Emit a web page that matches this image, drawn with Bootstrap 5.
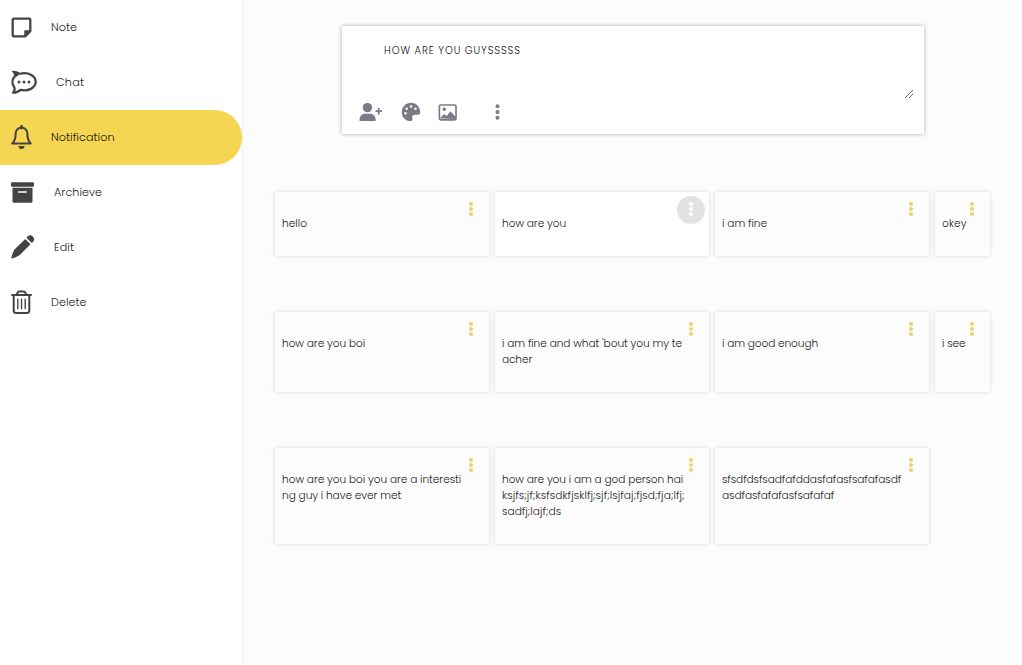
<!DOCTYPE html>
<html lang="en">
<head>
<meta charset="utf-8">
<meta name="viewport" content="width=device-width, initial-scale=1">
<title>Notes</title>
<link href="https://cdn.jsdelivr.net/npm/bootstrap@5.3.0/dist/css/bootstrap.min.css" rel="stylesheet">
<style>
body{background:#fcfcfc;color:#222;font-family:Poppins,Inter,"Open Sans",sans-serif;font-size:10.6px;font-weight:300;line-height:16px;overflow:hidden}
.sidebar{width:243px;background:#fff;border-right:1px solid #efefef}
.side-item{height:55px;width:242px;padding:0 0 1px 11px;color:#222;text-decoration:none;font-size:11.2px;gap:19px}
.side-item.active{background:#f6d553;border-radius:0 28px 28px 0;color:#111}
.side-item svg{color:#444;flex:none}
.composer{width:582px;height:108px;margin:26px 0 0 99px;background:#fff;border-radius:1px;box-shadow:0 0 4px rgba(0,0,0,.32)}
.composer-text{height:74px;padding:17px 11px 0 42px;font-size:10px;font-weight:300;color:#111}
.grip{margin-bottom:2px}
.composer-tools{height:24px;padding-left:17px;color:#7a7b86}
.board{margin:58px 0 0 32px;gap:56px}
.note-row{gap:6px}
.note{width:214px;border-radius:2px;box-shadow:0 0 4px rgba(0,0,0,.15);padding:24px 0 24px 7px}
.note.narrow{width:55px}
.note.hovered{background:#fff}
.note-menu{position:absolute;top:4px;right:4px;width:28px;height:28px;border-radius:50%;color:#edd574}
.hovered .note-menu{background:#e2e2e2;color:#fff}
.note-menu svg{position:absolute;left:11px;top:5px}
.ln{display:block;white-space:nowrap;width:max-content}
</style>
</head>
<body class="vh-100">
<svg width="0" height="0" class="position-absolute">
<symbol id="dots" viewBox="0 0 6 16"><g fill="currentColor"><circle cx="3" cy="3" r="2.1"/><circle cx="3" cy="8" r="2.1"/><circle cx="3" cy="13" r="2.1"/></g></symbol>
</svg>
<div class="d-flex vh-100">
<nav class="sidebar d-flex flex-column flex-shrink-0">
  <a class="side-item d-flex align-items-center" href="#"><svg width="21" height="21" viewBox="0 0 21 21" fill="none" stroke="currentColor" stroke-width="2.3" stroke-linejoin="round"><path d="M2.7 1.7h15.600a1 1 0 0 1 1 1v11.600l-5 5H2.700a1 1 0 0 1-1-1V2.700a1 1 0 0 1 1-1z"/><path d="M14 19v-5h5l-5 5z" fill="currentColor" stroke-width="1.5"/></svg><span class="ln" data-w="26">Note</span></a>
  <a class="side-item d-flex align-items-center" href="#"><svg width="26" height="24" viewBox="0 0 26 24"><path d="M9 3.800C17 1.800 24.700 5.500 24.700 11.800S17 21.600 9.500 19.900C7.500 21.800 5 22.800 2 22.700c1.600-1.700 1.900-3.700 1.300-5.300C.8 14 1 9.500 3.500 6.500" fill="none" stroke="currentColor" stroke-width="2.300" stroke-linejoin="round"/><path d="M.6.800C4.500.4 7.800 1.600 10 3.600L3.500 8C3.400 4.800 2.300 2.600.6.800z" fill="currentColor"/><g fill="currentColor"><circle cx="8" cy="12" r="1.500"/><circle cx="13" cy="12" r="1.500"/><circle cx="18" cy="12" r="1.500"/></g></svg><span class="ln" data-w="28">Chat</span></a>
  <a class="side-item active d-flex align-items-center" href="#"><svg width="21" height="24" viewBox="0 0 21 24"><path d="M10.500 2.800C6.500 2.800 4.600 5.600 4.600 9c0 5-1.200 7.400-3.300 9.500h18.400c-2.100-2.100-3.300-4.500-3.300-9.500 0-3.400-1.900-6.200-5.900-6.200z" fill="none" stroke="currentColor" stroke-width="2.100" stroke-linejoin="round"/><path d="M10.500 1.400v1.600" stroke="currentColor" stroke-width="2.800" stroke-linecap="round"/><path d="M7.500 20.900h6a3 3 0 0 1-6 0z" fill="currentColor"/></svg><span class="ln" data-w="63.5">Notification</span></a>
  <a class="side-item d-flex align-items-center" href="#"><svg width="24" height="21" viewBox="0 0 24 21"><rect y=".3" width="23" height="4.500" rx="1" fill="currentColor"/><path d="M1.500 5.800h20v13.400a1.500 1.500 0 0 1-1.500 1.500H3a1.500 1.500 0 0 1-1.500-1.500z" fill="currentColor"/><rect x="7" y="9.200" width="9" height="1.500" rx=".7" fill="#fff"/></svg><span class="ln" data-w="48">Archieve</span></a>
  <a class="side-item d-flex align-items-center" href="#"><svg width="24" height="24" viewBox="0 0 24 24" fill="currentColor"><path d="M14.200 3.900 19.500 9.200 8.800 20Q5.500 22.200 1.300 23.400.2 23.600.4 22.500 1.300 18.500 3.500 14.600z"/><path d="M15.400 2.700 17 1.100c1.400-1.400 3.400-.9 4.800.5s1.900 3.400.5 4.800l-1.600 1.600z"/></svg><span class="ln" data-w="20">Edit</span></a>
  <a class="side-item d-flex align-items-center" href="#"><svg width="21" height="24" viewBox="0 0 21 24" fill="none" stroke="currentColor" stroke-width="2" stroke-linecap="round"><path d="M1 5h19M5.500 4.600 7 2.200Q7.500 1.500 8.300 1.500h4.400q.8 0 1.300.7l1.500 2.400M2.700 5v15.500Q2.700 23 5.300 23h10.400q2.600 0 2.600-2.500V5"/><path d="M6.800 9.200v9.300M10.500 9.200v9.300M14.200 9.200v9.300" stroke-width="1.400"/></svg><span class="ln" data-w="35.5">Delete</span></a>
</nav>
<main class="flex-grow-1">
  <section class="composer">
    <div class="composer-text d-flex justify-content-between"><span class="ln" data-w="136.7">HOW ARE YOU GUYSSSSS</span><svg width="8" height="8" viewBox="0 0 8 8" class="grip align-self-end" stroke="#555" stroke-width=".9"><path d="M0 8 8 0M4 8l4-4"/></svg></div>
    <div class="composer-tools d-flex align-items-center">
      <svg width="24" height="20" viewBox="0 0 24 20" fill="currentColor"><circle cx="8.500" cy="5.600" r="4.700"/><path d="M.6 19v-1.500c0-3.200 2.300-5.700 5.500-5.700h5c3.200 0 5.500 2.500 5.500 5.700V19z"/><path d="M16.500 9.200h6.500M19.700 6v6.500" stroke="currentColor" stroke-width="1.800"/></svg>
      <svg width="20" height="20" viewBox="0 0 20 20" style="margin-left:18px"><path d="M10 .8C4.900.8.8 5 .8 10.200c0 4.900 3.800 8.800 8.500 8.900 1.700 0 2.500-1.100 2-2.900-.7-2.100.7-3.500 2.500-3.500h3.600c1.200 0 1.800-.9 1.800-2.500C19.200 5 15.100.8 10 .8z" fill="currentColor"/><g fill="#fff"><circle cx="4.500" cy="11.200" r="1.250"/><circle cx="5.700" cy="6.700" r="1.250"/><circle cx="10" cy="4.400" r="1.250"/><circle cx="14.500" cy="6.800" r="1.250"/></g></svg>
      <svg width="19" height="17" viewBox="0 0 19 17" style="margin-left:17px" fill="none" stroke="currentColor" stroke-width="1.700"><g transform="translate(.5 0)"><rect x=".9" y="1" width="16.600" height="14.800" rx="1.300"/><circle cx="5.800" cy="5.300" r="1.700" fill="currentColor" stroke="none"/><path d="M2 14.500v-1l3.800-3.500 2.300 2.100L12 7.200l5 5.800v2z" fill="currentColor" stroke="none"/></g></svg>
      <svg width="6" height="16" viewBox="0 0 6 16" style="margin-left:37px" fill="currentColor"><circle cx="3.500" cy="2.200" r="2"/><circle cx="3.500" cy="8" r="2"/><circle cx="3.500" cy="13.800" r="2"/></svg>
    </div>
  </section>
  <section class="board d-flex flex-column" id="board"></section>
</main>
</div>
<script src="https://cdn.jsdelivr.net/npm/bootstrap@5.3.0/dist/js/bootstrap.bundle.min.js"></script>
<script>
// Each note is a list of lines with the measure each line is set to.
const rows = [
  {h:64, notes:[[["hello",25]],[["how are you",64]],[["i am fine",45]],[["okey",24.5]]]},
  {h:80, notes:[[["how are you boi",83]],[["i am fine and what 'bout you my te",180],["acher",30]],[["i am good enough",96]],[["i see",23.5]]]},
  {h:96, notes:[[["how are you boi you are a interesti",179],["ng guy i have ever met",119]],[["how are you i am a god person hai",181],["ksjfs;jf;ksfsdkfjsklfj;sjf;lsjfaj;fjsd;fja;lfj;",182.5],["sadfj;lajf;ds",59]],[["sfsdfdsfsadfafddasfafasfsafafasdf",179],["asdfasfafafasfsafafaf",112]]]}
];
document.getElementById('board').innerHTML = rows.map((r,i)=>'<div class="note-row d-flex" style="height:'+r.h+'px">'+r.notes.map((n,j)=>
  '<article class="note position-relative '+(j===3?'narrow ':'')+(i===0&&j===1?'hovered':'')+'"><div class="note-menu"><svg width="6" height="16"><use href="#dots"/></svg></div>'+
  n.map(l=>'<span class="ln" data-w="'+l[1]+'">'+l[0]+'</span>').join('')+'</article>').join('')+'</div>').join('');
// Track every line to its measure.
document.querySelectorAll('.ln').forEach(e=>{
  const w=e.getBoundingClientRect().width;
  e.style.letterSpacing=((+e.dataset.w+.1-w)/e.textContent.length).toFixed(3)+'px';
});
</script>
</body>
</html>
